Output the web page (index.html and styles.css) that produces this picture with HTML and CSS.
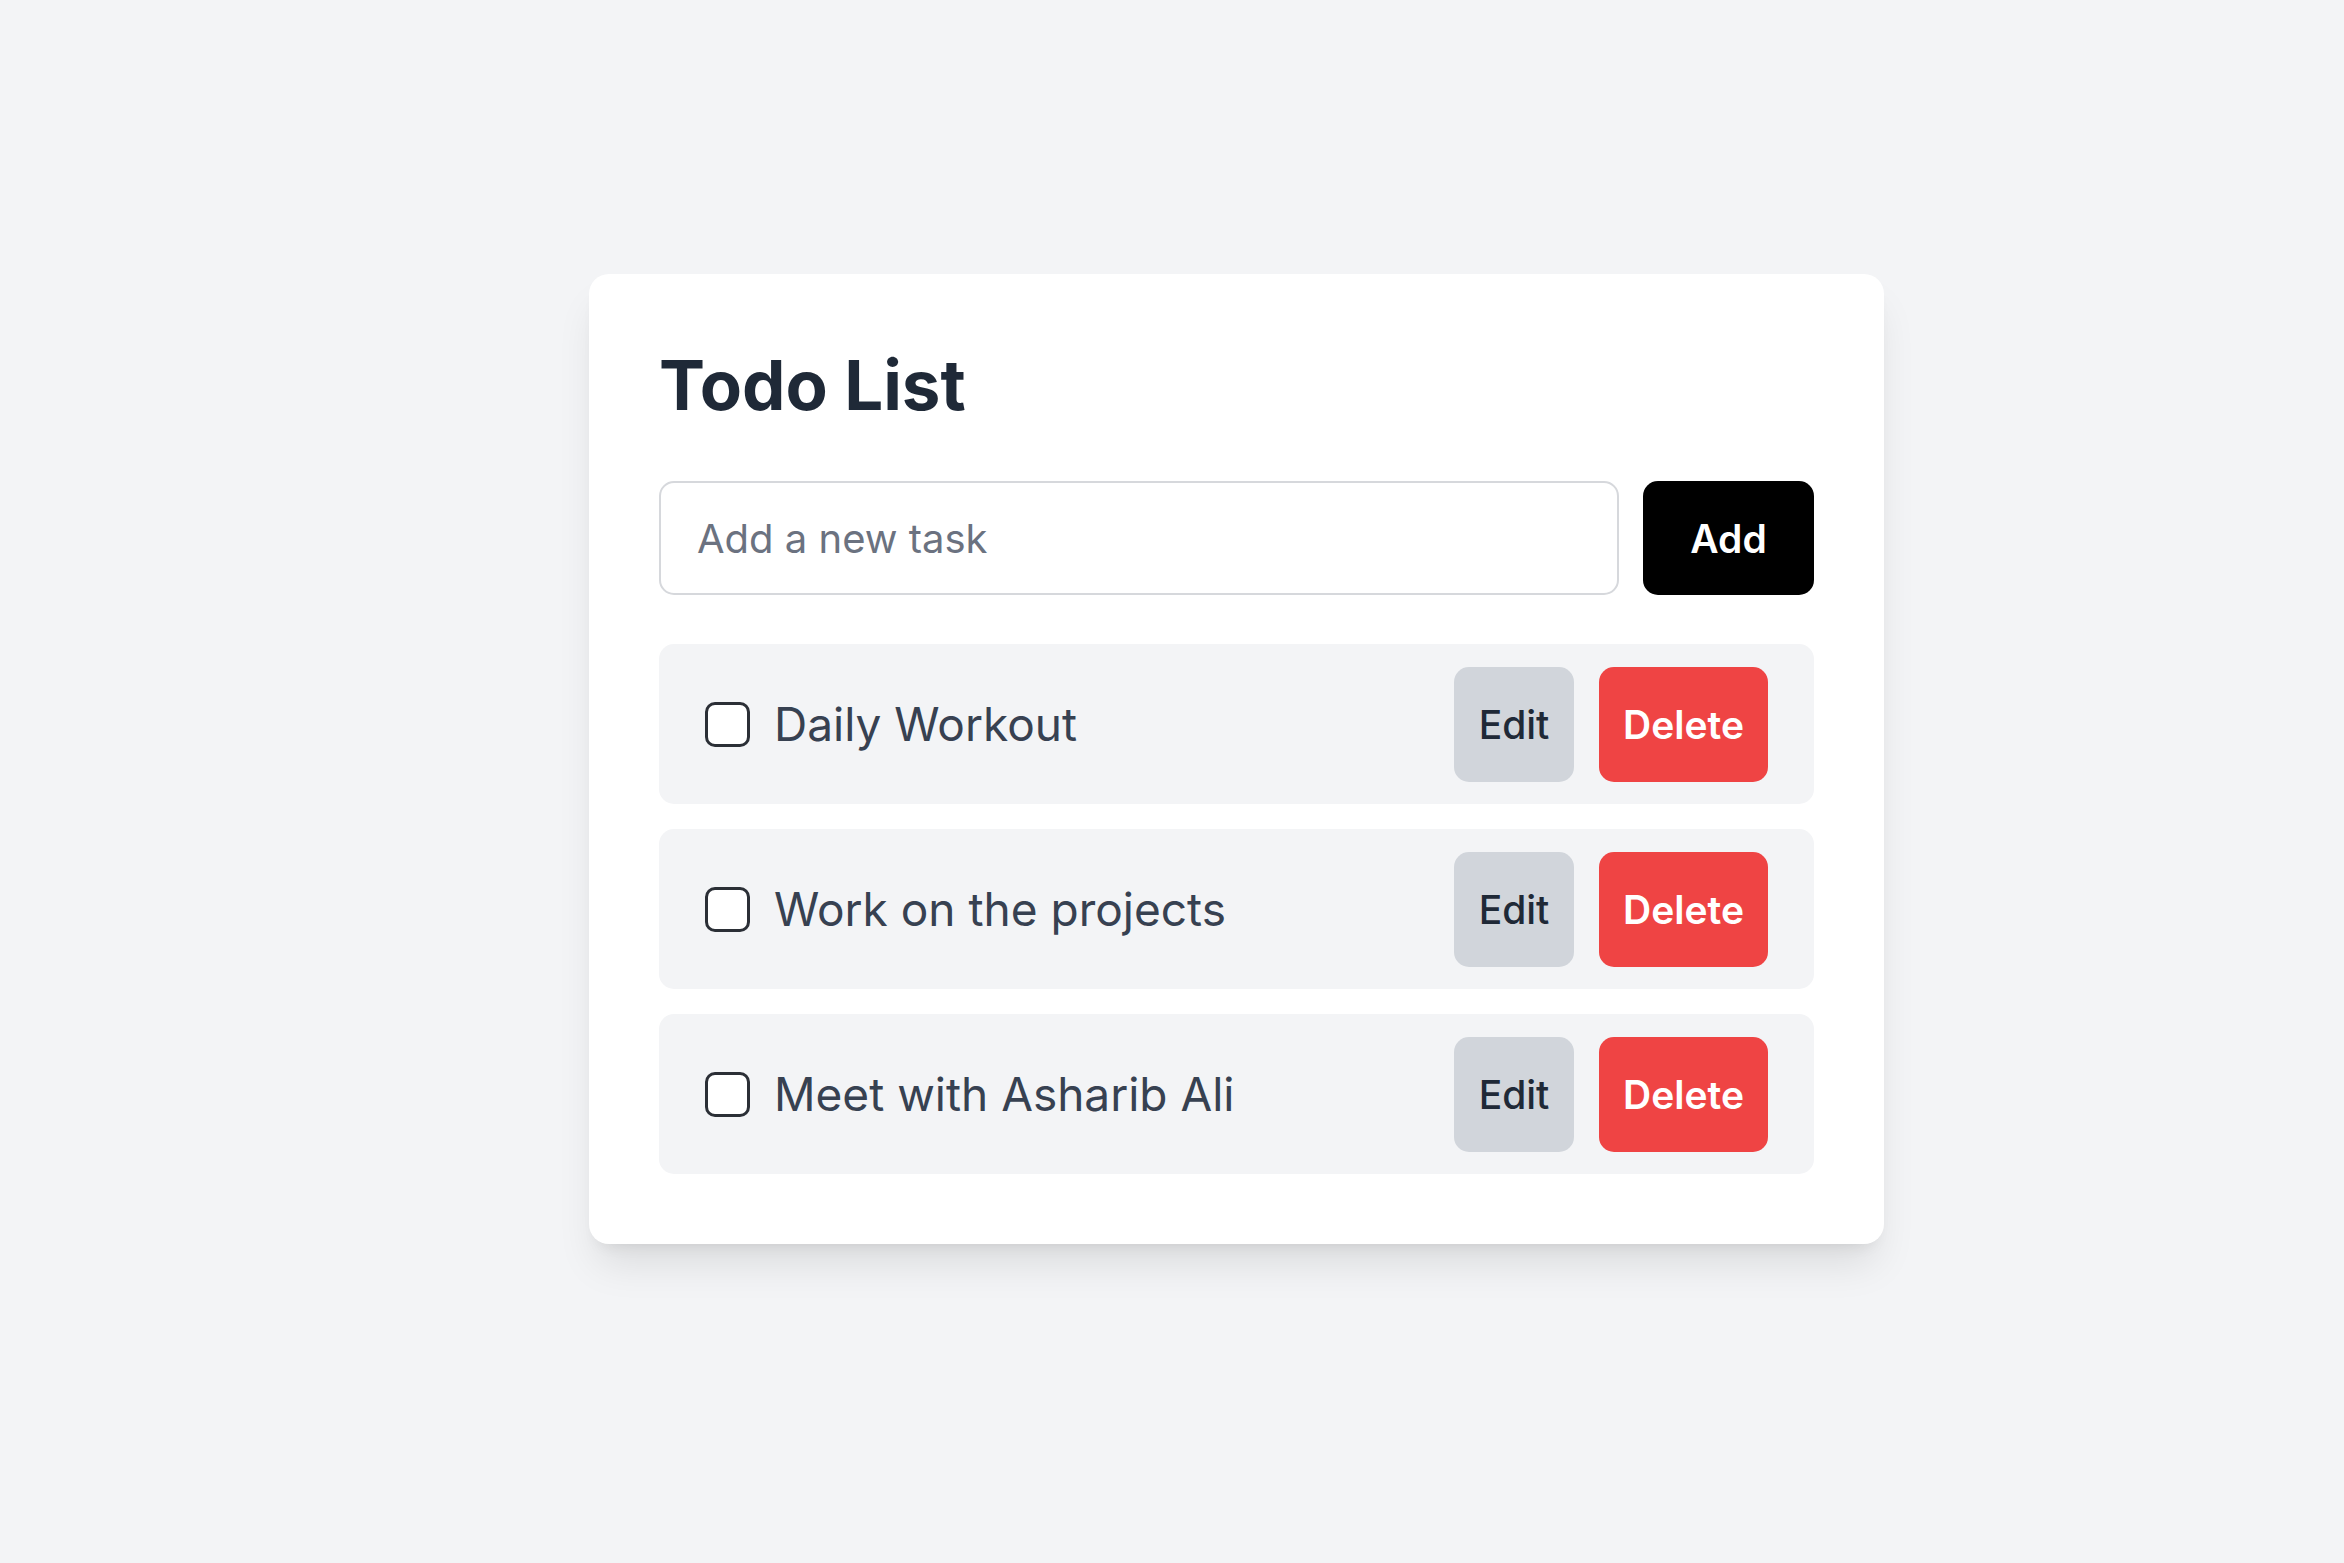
FILE: index.html
```html
<!DOCTYPE html>
<html lang="en">
<head>
<meta charset="utf-8">
<title>Todo List</title>
<link rel="stylesheet" href="styles.css">
</head>
<body>
<main class="page">
  <section class="card">
    <h1 class="title">Todo List</h1>
    <form class="add-row" onsubmit="return false">
      <input class="task-input" type="text" placeholder="Add a new task">
      <button class="btn btn-add" type="submit">Add</button>
    </form>
    <ul class="list">
      <li class="item">
        <label class="item-label"><input class="check" type="checkbox"><span class="item-text">Daily Workout</span></label>
        <div class="actions"><button class="btn btn-edit">Edit</button><button class="btn btn-delete">Delete</button></div>
      </li>
      <li class="item">
        <label class="item-label"><input class="check" type="checkbox"><span class="item-text">Work on the projects</span></label>
        <div class="actions"><button class="btn btn-edit">Edit</button><button class="btn btn-delete">Delete</button></div>
      </li>
      <li class="item">
        <label class="item-label"><input class="check" type="checkbox"><span class="item-text">Meet with Asharib Ali</span></label>
        <div class="actions"><button class="btn btn-edit">Edit</button><button class="btn btn-delete">Delete</button></div>
      </li>
    </ul>
  </section>
</main>
</body>
</html>
```
FILE: styles.css
```css
* { box-sizing: border-box; }
html, body { margin: 0; padding: 0; }
body {
  background: #f3f4f6;
  font-family: Inter, "Noto Sans", "Liberation Sans", sans-serif;
  min-height: 100vh;
}
.page {
  padding: 274px 0 0 589px;
}
.card {
  width: 1295px;
  background: #ffffff;
  border-radius: 20px;
  padding: 71px 70px 70px 70px;
  box-shadow: 0 27px 40px -8px rgba(0,0,0,0.10), 0 10px 16px -10px rgba(0,0,0,0.10);
}
.title {
  margin: 0 0 56px 0;
  font-size: 69px;
  line-height: 80px;
  font-weight: 700;
  color: #1f2937;
}
.add-row {
  display: flex;
  gap: 24px;
  margin: 0;
}
.task-input {
  flex: 1;
  height: 114px;
  border: 2px solid #d6d8dc;
  border-radius: 15px;
  padding: 0 36px;
  font-family: inherit;
  font-size: 40px;
  color: #1f2937;
  background: #fff;
  outline: none;
}
.task-input::placeholder { color: #6b7280; }
.btn {
  border: none;
  font-family: inherit;
  font-weight: 600;
  cursor: pointer;
  border-radius: 15px;
  padding: 0;
}
.btn-add {
  width: 171px;
  height: 114px;
  background: #000;
  color: #fff;
  font-size: 39px;
}
.list {
  list-style: none;
  margin: 49px 0 0 0;
  padding: 0;
  display: flex;
  flex-direction: column;
  gap: 25px;
}
.item {
  height: 160px;
  background: #f3f4f6;
  border-radius: 15px;
  padding: 0 46px;
  display: flex;
  align-items: center;
  justify-content: space-between;
}
.item-label {
  display: flex;
  align-items: center;
  gap: 24px;
}
.check {
  appearance: none;
  -webkit-appearance: none;
  margin: 0;
  width: 45px;
  height: 45px;
  border: 3px solid #2b2f36;
  border-radius: 10px;
  background: #fff;
}
.item-text {
  font-size: 46px;
  color: #374151;
}
.actions {
  display: flex;
  gap: 25px;
}
.btn-edit {
  width: 120px;
  height: 115px;
  background: #d1d5db;
  color: #1f2937;
  font-size: 39px;
  font-weight: 500;
}
.btn-delete {
  width: 169px;
  height: 115px;
  background: #ef4444;
  color: #fff;
  font-size: 39px;
}
```
